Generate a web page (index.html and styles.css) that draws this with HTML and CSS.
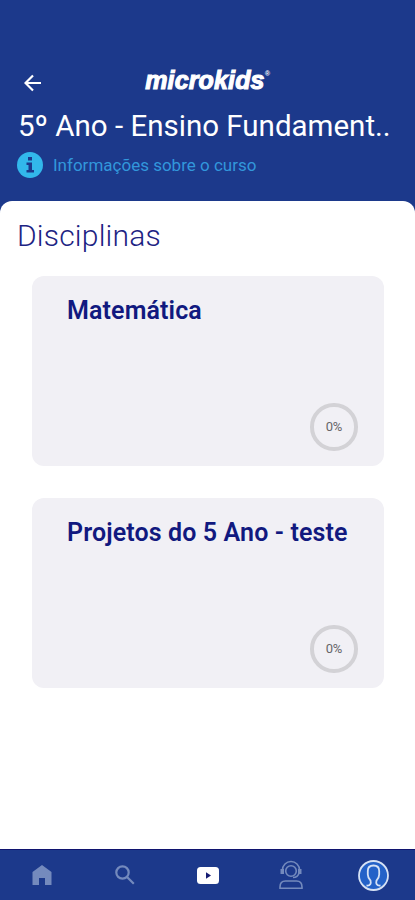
FILE: index.html
```html
<!DOCTYPE html>
<html lang="pt-BR">
<head>
<meta charset="utf-8">
<title>microkids</title>
<link rel="stylesheet" href="styles.css">
</head>
<body>
<header class="header">
  <div class="topbar">
    <svg class="back" viewBox="0 0 18 18"><path d="M17 9H2M9 1.5L1.5 9L9 16.5"/></svg>
    <div class="brand">microkids<span class="reg">®</span></div>
  </div>
  <h1 class="title">5º Ano - Ensino Fundament..</h1>
  <div class="info">
    <svg class="info-icon" viewBox="0 0 26 26"><circle cx="13" cy="13" r="13"/><path d="M11 5h4v3.500h-4zM9.500 10.500H15V18h2v2.500H9.500V18h2v-5h-2z"/></svg>
    <span class="info-text">Informações sobre o curso</span>
  </div>
</header>
<main class="sheet">
  <h2 class="section">Disciplinas</h2>
  <article class="card">
    <h3 class="card-title">Matemática</h3>
    <div class="ring">0%</div>
  </article>
  <article class="card">
    <h3 class="card-title">Projetos do 5 Ano - teste</h3>
    <div class="ring">0%</div>
  </article>
</main>
<nav class="nav">
  <a class="tab"><svg class="dim" width="20" height="20" viewBox="0 0 20 20"><path class="fill" d="M10 0L19.500 7V20H13V13H7V20H.5V7Z"/></svg></a>
  <a class="tab"><svg class="dim" width="20" height="20" viewBox="0 0 20 20"><circle cx="7.500" cy="7.500" r="6.200"/><path d="M12 12L18.800 18.800"/></svg></a>
  <a class="tab"><svg width="22" height="17" viewBox="0 0 22 17"><rect class="white" width="22" height="17" rx="3.500"/><path class="play" d="M9 5.300L14 8.500L9 11.700Z"/></svg></a>
  <a class="tab"><svg class="dim thin" width="26" height="30" viewBox="0 0 26 30"><circle cx="13" cy="11" r="5.300"/><path d="M4.500 10a8.500 8.500 0 0 1 17 0M21 13q-1 4.500-6 4.500M2 28.200v-1.200q0-6 5.500-6h11q5.500 0 5.500 6v1.200z"/><path class="fill" d="M2.500 9H6v5H2.500zM20 9h3.500v5H20z"/></svg></a>
  <a class="tab"><svg width="31" height="31" viewBox="0 0 31 31"><circle class="avatar" cx="15.500" cy="15.500" r="14.500"/><path class="person" d="M8.500 25.500c4 .5 4.800-2 4-5-1.300-1.500-2.700-3-2.700-6V11c0-3.700 2.200-5.500 5.700-5.500s5.700 1.800 5.700 5.500v3.500c0 3-1.400 4.500-2.700 6-.8 3 0 5.500 4 5"/></svg></a>
</nav>
</body>
</html>
```
FILE: styles.css
```css
* { box-sizing: border-box; }
body {
  margin: 0;
  height: 900px;
  display: flex;
  flex-direction: column;
  background: #1c398b;
  font-family: Roboto, "Liberation Sans", sans-serif;
  overflow: hidden;
}
h1, h2, h3 { margin: 0; white-space: nowrap; }
.header { height: 201px; padding: 66px 18px 0; }
.topbar {
  height: 32px;
  display: grid;
  grid-template-columns: 1fr auto 1fr;
  align-items: center;
}
.back {
  width: 18px;
  height: 18px;
  margin: 2px 0 0 6px;
  fill: none;
  stroke: #fff;
  stroke-width: 2.2;
}
.brand {
  display: flex;
  margin-top: -4px;
  color: #fff;
  font: italic 700 25px/28px "Liberation Sans", sans-serif;
  letter-spacing: 0.15px;
  -webkit-text-stroke: 1.1px #fff;
}
.reg { font-size: 7px; line-height: 15px; letter-spacing: 0; -webkit-text-stroke: 0; }
.title {
  margin-top: 10px;
  color: #fff;
  font-size: 29.5px;
  font-weight: 400;
  line-height: 36px;
}
.info { display: flex; align-items: center; margin: 8px 0 0 -1px; }
.info-icon { width: 26px; height: 26px; fill: #32b8eb; }
.info-icon path { fill: #1c398b; }
.info-text { margin-left: 10px; color: #3297db; font-size: 17px; line-height: 26px; }
.sheet {
  flex: 1;
  padding: 17px 31px 0 32px;
  background: #fff;
  border-top-left-radius: 12px;
  border-top-right-radius: 12px;
}
.section {
  margin: 0 0 22px -15px;
  color: #1d2383;
  font-size: 30px;
  font-weight: 300;
  line-height: 36px;
  letter-spacing: 0.2px;
}
.card {
  height: 189.500px;
  margin-bottom: 32.500px;
  padding: 18px 26.500px 15px 35px;
  display: flex;
  flex-direction: column;
  justify-content: space-between;
  border-radius: 12px;
  background: #f1f0f5;
}
.card-title {
  color: #11197f;
  font-size: 25px;
  font-weight: 600;
  line-height: 33px;
  letter-spacing: 0.12px;
}
.ring {
  align-self: flex-end;
  width: 47.500px;
  height: 47.500px;
  border: 4px solid #d3d2d6;
  border-radius: 50%;
  color: #666569;
  font-size: 13px;
  line-height: 40px;
  text-align: center;
  letter-spacing: -0.5px;
}
.nav {
  height: 51px;
  display: grid;
  grid-template-columns: repeat(5, 1fr);
  border-top: 1px solid #10146f;
  background: #1c398b;
}
.tab { display: flex; align-items: center; justify-content: center; }
.dim { fill: none; stroke: #748abd; stroke-width: 2.2; }
.thin { stroke-width: 1.6; }
.fill { fill: #748abd; stroke: none; }
.white { fill: #fff; }
.play { fill: #151b72; }
.avatar { fill: #2462c8; stroke: #d6e2f5; stroke-width: 1.8; }
.person { fill: none; stroke: #d6e2f5; stroke-width: 1.8; }
```
